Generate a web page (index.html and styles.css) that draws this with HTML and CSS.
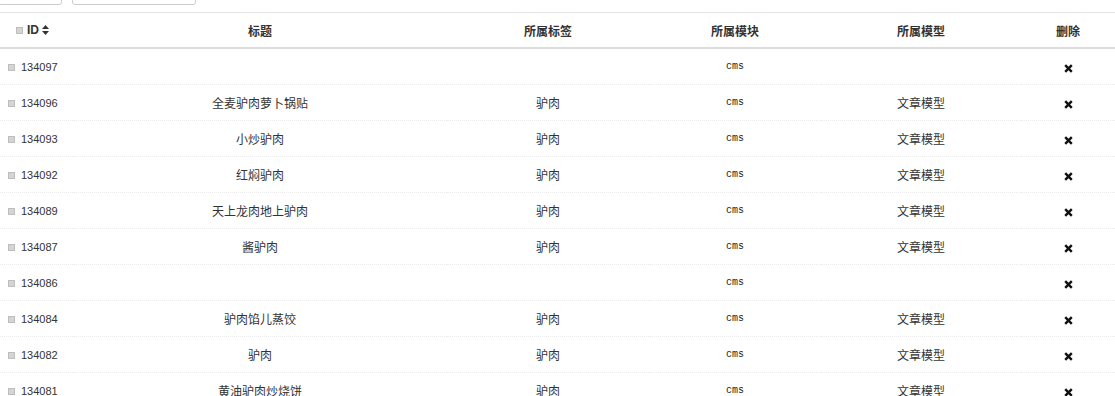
FILE: index.html
```html
<!DOCTYPE html>
<html lang="zh-CN">
<head>
<meta charset="utf-8">
<link rel="stylesheet" href="styles.css">
</head>
<body>
<div class="toolbar">
  <div class="box box-a"></div>
  <div class="box box-b"></div>
</div>
<table class="grid">
  <colgroup>
    <col class="c-id"><col class="c-title"><col class="c-tag"><col class="c-mod"><col class="c-model"><col class="c-del">
  </colgroup>
  <thead>
    <tr>
      <th class="id-cell"><span class="chk"></span>ID<svg class="sort" width="7" height="10" viewBox="0 0 7 10"><path d="M0 4 L3.5 0 L7 4 Z M0 6 L3.5 10 L7 6 Z" fill="#333"/></svg></th>
      <th>标题</th>
      <th>所属标签</th>
      <th>所属模块</th>
      <th>所属模型</th>
      <th>删除</th>
    </tr>
  </thead>
  <tbody>
    <tr><td class="id-cell"><span class="chk"></span>134097</td><td></td><td></td><td class="mono">cms</td><td></td><td><svg class="del" width="9" height="9" viewBox="0 0 9 9"><path d="M1.2 1.2 L7.8 7.8 M7.8 1.2 L1.2 7.8" stroke="#111" stroke-width="2.4"/></svg></td></tr>
    <tr><td class="id-cell"><span class="chk"></span>134096</td><td>全麦驴肉萝卜锅贴</td><td>驴肉</td><td class="mono">cms</td><td>文章模型</td><td><svg class="del" width="9" height="9" viewBox="0 0 9 9"><path d="M1.2 1.2 L7.8 7.8 M7.8 1.2 L1.2 7.8" stroke="#111" stroke-width="2.4"/></svg></td></tr>
    <tr><td class="id-cell"><span class="chk"></span>134093</td><td>小炒驴肉</td><td>驴肉</td><td class="mono">cms</td><td>文章模型</td><td><svg class="del" width="9" height="9" viewBox="0 0 9 9"><path d="M1.2 1.2 L7.8 7.8 M7.8 1.2 L1.2 7.8" stroke="#111" stroke-width="2.4"/></svg></td></tr>
    <tr><td class="id-cell"><span class="chk"></span>134092</td><td>红焖驴肉</td><td>驴肉</td><td class="mono">cms</td><td>文章模型</td><td><svg class="del" width="9" height="9" viewBox="0 0 9 9"><path d="M1.2 1.2 L7.8 7.8 M7.8 1.2 L1.2 7.8" stroke="#111" stroke-width="2.4"/></svg></td></tr>
    <tr><td class="id-cell"><span class="chk"></span>134089</td><td>天上龙肉地上驴肉</td><td>驴肉</td><td class="mono">cms</td><td>文章模型</td><td><svg class="del" width="9" height="9" viewBox="0 0 9 9"><path d="M1.2 1.2 L7.8 7.8 M7.8 1.2 L1.2 7.8" stroke="#111" stroke-width="2.4"/></svg></td></tr>
    <tr><td class="id-cell"><span class="chk"></span>134087</td><td>酱驴肉</td><td>驴肉</td><td class="mono">cms</td><td>文章模型</td><td><svg class="del" width="9" height="9" viewBox="0 0 9 9"><path d="M1.2 1.2 L7.8 7.8 M7.8 1.2 L1.2 7.8" stroke="#111" stroke-width="2.4"/></svg></td></tr>
    <tr><td class="id-cell"><span class="chk"></span>134086</td><td></td><td></td><td class="mono">cms</td><td></td><td><svg class="del" width="9" height="9" viewBox="0 0 9 9"><path d="M1.2 1.2 L7.8 7.8 M7.8 1.2 L1.2 7.8" stroke="#111" stroke-width="2.4"/></svg></td></tr>
    <tr><td class="id-cell"><span class="chk"></span>134084</td><td>驴肉馅儿蒸饺</td><td>驴肉</td><td class="mono">cms</td><td>文章模型</td><td><svg class="del" width="9" height="9" viewBox="0 0 9 9"><path d="M1.2 1.2 L7.8 7.8 M7.8 1.2 L1.2 7.8" stroke="#111" stroke-width="2.4"/></svg></td></tr>
    <tr><td class="id-cell"><span class="chk"></span>134082</td><td>驴肉</td><td>驴肉</td><td class="mono">cms</td><td>文章模型</td><td><svg class="del" width="9" height="9" viewBox="0 0 9 9"><path d="M1.2 1.2 L7.8 7.8 M7.8 1.2 L1.2 7.8" stroke="#111" stroke-width="2.4"/></svg></td></tr>
    <tr><td class="id-cell"><span class="chk"></span>134081</td><td>黄油驴肉炒烧饼</td><td>驴肉</td><td class="mono">cms</td><td>文章模型</td><td><svg class="del" width="9" height="9" viewBox="0 0 9 9"><path d="M1.2 1.2 L7.8 7.8 M7.8 1.2 L1.2 7.8" stroke="#111" stroke-width="2.4"/></svg></td></tr>
  </tbody>
</table>
</body>
</html>
```
FILE: styles.css
```css
html, body {
  margin: 0;
  padding: 0;
  background: #fff;
}
body {
  font-family: "Noto Sans CJK SC", "Liberation Sans", sans-serif;
  font-size: 12px;
  color: #333;
  overflow: hidden;
}
.toolbar {
  display: flex;
  align-items: flex-end;
  height: 5px;
  overflow: hidden;
  margin-bottom: 7px;
}
.box {
  height: 30px;
  border: 1px solid #ccc;
  border-radius: 3px;
  box-sizing: border-box;
  flex: none;
}
.box-a {
  width: 64px;
  margin-left: -2px;
}
.box-b {
  width: 124px;
  margin-left: 10px;
}
.grid {
  width: 1115px;
  border-collapse: collapse;
  table-layout: fixed;
  border-top: 1px solid #e6e6e6;
}
.c-id { width: 73px; }
.c-title { width: 374px; }
.c-tag { width: 202px; }
.c-mod { width: 172px; }
.c-model { width: 200px; }
.c-del { width: 94px; }
th {
  height: 34px;
  padding: 0;
  font-weight: bold;
  text-align: center;
  border-bottom: 2px solid #ddd;
  font-size: 12px;
  color: #333;
}
td {
  height: 35px;
  padding: 0;
  text-align: center;
  border-top: 1px dotted #ececec;
  font-size: 12px;
  line-height: 16px;
}
tbody tr:first-child td {
  border-top: none;
  height: 35px;
}
.id-cell {
  text-align: left;
  padding-left: 8px;
  font-family: "Liberation Sans", sans-serif;
  font-size: 11px;
  white-space: nowrap;
}
th.id-cell {
  padding-left: 16px;
  font-size: 12px;
}
.chk {
  display: inline-block;
  width: 7px;
  height: 7px;
  background: #d4d4d4;
  border: 1px solid #bdbdbd;
  box-sizing: border-box;
  margin-right: 6px;
  vertical-align: 0px;
}
th .chk {
  margin-right: 4px;
}
.sort {
  margin-left: 3px;
  vertical-align: -1px;
}
.mono {
  font-family: "Liberation Mono", monospace;
  font-size: 10px;
  color: #222;
}
.del {
  display: inline-block;
  vertical-align: -1px;
}
```
